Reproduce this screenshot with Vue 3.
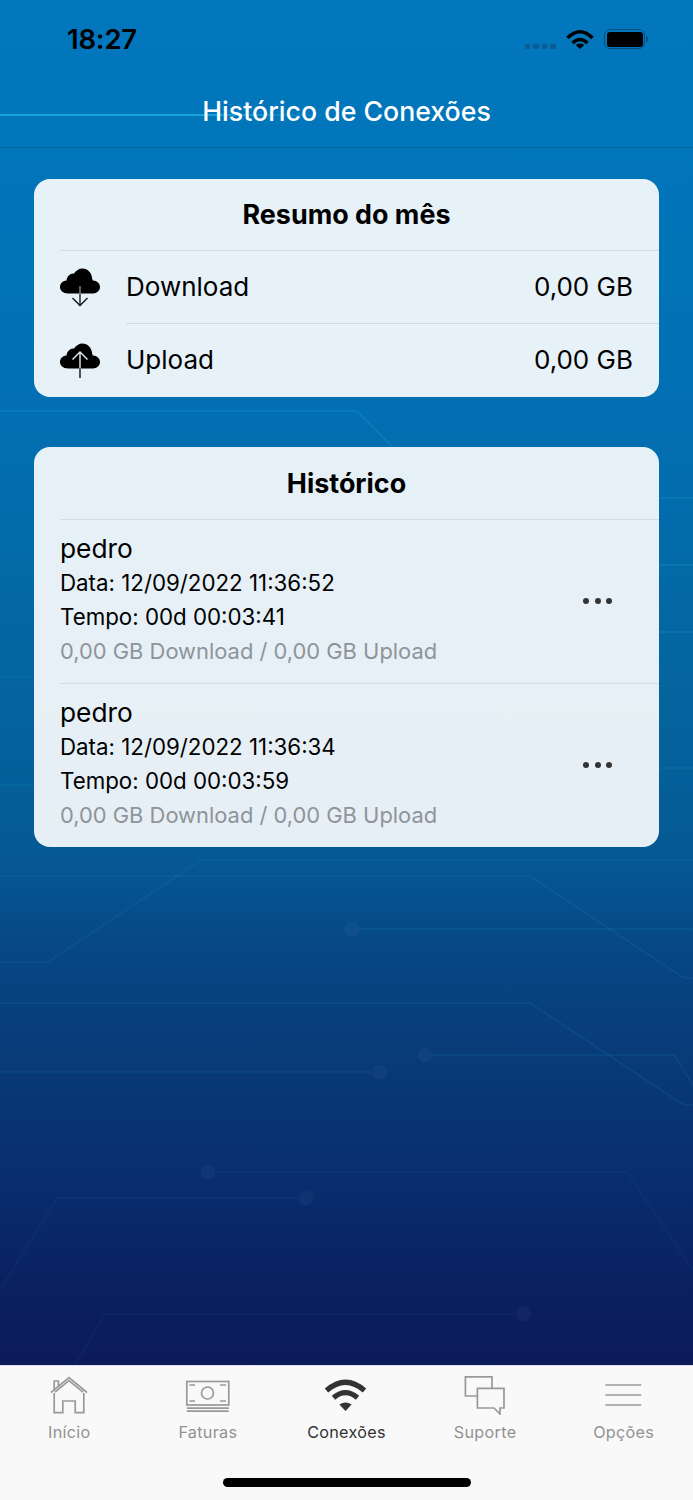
<script setup>
const summary = [
  { label: 'Download', value: '0,00 GB', dir: 'down' },
  { label: 'Upload', value: '0,00 GB', dir: 'up' },
]
const sessions = [
  { user: 'pedro', date: 'Data: 12/09/2022 11:36:52', time: 'Tempo: 00d 00:03:41', usage: '0,00 GB Download / 0,00 GB Upload' },
  { user: 'pedro', date: 'Data: 12/09/2022 11:36:34', time: 'Tempo: 00d 00:03:59', usage: '0,00 GB Download / 0,00 GB Upload' },
]
const tabs = [
  { label: 'Início', id: 'home' },
  { label: 'Faturas', id: 'bill' },
  { label: 'Conexões', id: 'wifi', active: true },
  { label: 'Suporte', id: 'chat' },
  { label: 'Opções', id: 'menu' },
]
const bright = ['M0 411H357L393 447', 'M659 498H693', 'M659 565H693', 'M659 632H693']
const mid = [
  'M0 677H34', 'M0 785H34', 'M659 768H693',
  'M0 962H48L201 860H693',
  'M0 876H530L684 978H693',
  'M360 929H693',
  'M0 1003H530L684 1105H693',
  'M433 1055H674L693 1085',
  'M0 1072H372',
]
const faint = [
  'M216 1172H627L693 1270',
  'M298 1198H57L0 1290',
  'M515 1314H105L75 1365',
]
const nodes = [[352, 929], [425, 1055], [380, 1072], [208, 1172], [306, 1198], [523, 1314]]
const cloud = 'M8 25C3 25 0 22 0 18.5C0 14.8 3 12.2 6.5 12C7 7.6 10.5 4.4 14 5C16 2 19 0 22.5 0C27.5 0 31.5 4 32 9C32 10 32.6 11.6 33 12C37 12.2 40 15 40 18.5C40 22 37 25 33 25Z'
</script>

<template>
  <div class="screen">
    <svg class="circuit" width="693" height="1500" viewBox="0 0 693 1500" aria-hidden="true">
      <defs>
        <linearGradient id="glow" x1="0" y1="0" x2="1" y2="0">
          <stop offset="0" stop-color="#19a3d6" />
          <stop offset="0.6" stop-color="#19a3d6" />
          <stop offset="1" stop-color="#19a3d6" stop-opacity="0" />
        </linearGradient>
      </defs>
      <rect x="0" y="114" width="330" height="2" fill="url(#glow)" />
      <path v-for="d in bright" :key="d" :d="d" class="trace bright" />
      <path v-for="d in mid" :key="d" :d="d" class="trace mid" />
      <path v-for="d in faint" :key="d" :d="d" class="trace faint" />
      <circle v-for="n in nodes" :key="n[0]" :cx="n[0]" :cy="n[1]" r="7.5" class="node" />
    </svg>

    <header class="top">
      <div class="status">
        <span class="clock">18:27</span>
        <div class="status-icons">
          <div class="signal"><i></i><i></i><i></i><i></i></div>
          <svg class="st-wifi" width="28" height="20" viewBox="0 0 28 20">
            <path d="M1.5 9Q14 -3.5 26.5 9" fill="none" stroke="#000" stroke-width="3.5" />
            <path d="M6.5 14Q14 7 21.5 14" fill="none" stroke="#000" stroke-width="3.5" />
            <path d="M14 20L9.8 15.9Q14 13 18.2 15.9Z" fill="#000" />
          </svg>
          <div class="battery"><div class="charge"></div></div>
          <div class="nub"></div>
        </div>
      </div>
      <h1 class="nav-title">Histórico de Conexões</h1>
    </header>

    <main class="content">
      <section class="card">
        <h2 class="card-title">Resumo do mês</h2>
        <div class="rows">
          <div v-for="row in summary" :key="row.label" class="sum-row">
            <svg class="cloud" width="40" height="40" viewBox="0 0 40 40">
              <template v-if="row.dir === 'down'">
                <path :d="cloud" fill="#000" transform="translate(0 .5)" />
                <path d="M20 18V26" fill="none" stroke="#8d9499" stroke-width="1.3" />
                <path d="M20 26V37.5" fill="none" stroke="#111" stroke-width="1.3" />
                <path d="M12.5 30L20 37.5L27.5 30" fill="none" stroke="#111" stroke-width="1.3" />
              </template>
              <template v-else>
                <path :d="cloud" fill="#000" transform="translate(0 2.5)" />
                <path d="M20 11V27.5" fill="none" stroke="#e8f0f6" stroke-width="1.4" />
                <path d="M20 27.5V37" fill="none" stroke="#111" stroke-width="1.4" />
                <path d="M12.5 18.5L20 11L27.5 18.5" fill="none" stroke="#e8f0f6" stroke-width="1.4" />
              </template>
            </svg>
            <div class="sum-body">
              <span>{{ row.label }}</span>
              <span>{{ row.value }}</span>
            </div>
          </div>
        </div>
      </section>

      <section class="card history">
        <h2 class="card-title">Histórico</h2>
        <div v-for="s in sessions" :key="s.date" class="session">
          <div class="session-text">
            <div class="user">{{ s.user }}</div>
            <div class="meta">{{ s.date }}</div>
            <div class="meta">{{ s.time }}</div>
            <div class="meta usage">{{ s.usage }}</div>
          </div>
          <div class="more"><i></i><i></i><i></i></div>
        </div>
      </section>
    </main>

    <nav class="tabbar">
      <div class="tabs">
        <div v-for="t in tabs" :key="t.id" class="tab" :class="{ active: t.active }">
          <svg width="48" height="40" viewBox="0 0 48 40" class="tab-icon">
            <g v-if="t.id === 'home'">
              <path d="M6 17.5L24 2.5L42 17.5" />
              <path d="M9.2 18V37.6H17.8V26H30.2V37.6H38.8V18" />
              <path d="M9.2 15V6H13.4V11.5" />
              <path d="M10 17.2L24 5.6L38 17.2" />
            </g>
            <g v-else-if="t.id === 'bill'">
              <rect x="2.8" y="6.5" width="42" height="23.5" />
              <circle cx="23.5" cy="18" r="6" />
              <path d="M5.5 10H11M36 10H42M5.5 26H11M36 26H42" />
              <path d="M2.8 33.2H44.8M2.8 36.2H44.8" />
            </g>
            <g v-else-if="t.id === 'wifi'">
              <path d="M4.5 15.5Q23.5 -1 42.5 15.5" class="bold" />
              <path d="M11.5 22.8Q23.5 12.4 35.5 22.8" class="bold" />
              <path d="M23.5 36L17.4 29.6Q23.5 25.4 29.6 29.6Z" class="solid" />
            </g>
            <g v-else-if="t.id === 'chat'">
              <path d="M31 13V1.8H4.4V21H16" />
              <path d="M16.4 13.4H43V33H39V39L33 33H16.4Z" />
            </g>
            <g v-else>
              <path d="M5.3 10H41.3M5.3 20H41.3M5.3 30H41.3" />
            </g>
          </svg>
          <span class="tab-label">{{ t.label }}</span>
        </div>
      </div>
      <div class="home-bar"></div>
    </nav>
  </div>
</template>

<style scoped>
.screen {
  position: relative;
  width: 693px;
  height: 1500px;
  overflow: hidden;
  display: flex;
  flex-direction: column;
  font-family: Inter, "Liberation Sans", sans-serif;
  color: #000;
  background: linear-gradient(180deg, #0277bd 0, #0174b8 250px, #026fb2 420px, #04659f 680px, #055a95 850px, #074584 960px, #083b78 1060px, #092b6b 1200px, #0b1f5e 1300px, #0c1a5a 1365px);
}
.circuit {
  position: absolute;
  left: 0;
  top: 0;
}
.trace {
  fill: none;
  stroke: #2bb6dc;
  stroke-width: 1.5;
}
.bright {
  stroke-opacity: 0.22;
}
.mid {
  stroke-opacity: 0.11;
}
.faint {
  stroke-opacity: 0.06;
}
.node {
  fill: #7d9cc4;
  fill-opacity: 0.07;
}
.top {
  position: relative;
  height: 148px;
  border-bottom: 1px solid #04649f;
  box-sizing: border-box;
}
.status {
  height: 80px;
  display: flex;
  justify-content: space-between;
  padding: 0 45px 0 67px;
}
.clock {
  font-size: 27.5px;
  font-weight: 600;
  line-height: 30px;
  margin-top: 24px;
  letter-spacing: -0.2px;
}
.status-icons {
  display: flex;
  align-items: flex-start;
  padding-top: 29px;
}
.signal {
  display: flex;
  gap: 3px;
  margin: 15px 10.5px 0 0;
}
.signal i {
  width: 5.5px;
  height: 5px;
  border-radius: 1px;
  background: #0a5c93;
}
.battery {
  margin-left: 10px;
  width: 41px;
  height: 20px;
  box-sizing: border-box;
  border: 1.5px solid #0a4f80;
  border-radius: 6px;
  padding: 1.5px;
}
.charge {
  height: 100%;
  background: #000;
  border-radius: 3px;
}
.nub {
  width: 2px;
  height: 6px;
  margin: 7px 0 0 1px;
  background: #0a4f80;
  border-radius: 0 2px 2px 0;
}
.nav-title {
  margin: 0;
  text-align: center;
  color: #fff;
  font-size: 26.7px;
  font-weight: 500;
  line-height: 62px;
}
.content {
  position: relative;
  flex: 1;
  padding: 31px 34px 0;
  display: flex;
  flex-direction: column;
  gap: 50px;
}
.card {
  border-radius: 16px;
  background: rgba(255, 255, 255, 0.9);
  overflow: hidden;
}
.card-title {
  margin: 0;
  height: 71px;
  line-height: 71px;
  text-align: center;
  font-size: 26.9px;
  font-weight: 700;
}
.history .card-title {
  height: 72px;
  line-height: 72px;
}
.sum-row {
  display: flex;
  align-items: stretch;
  height: 73px;
}
.rows {
  margin-left: 26px;
  border-top: 1px solid #d2dbe3;
}
.cloud {
  flex: none;
  overflow: visible;
  align-self: center;
}
.sum-body {
  flex: 1;
  margin-left: 26px;
  padding-right: 26px;
  padding-bottom: 2px;
  display: flex;
  justify-content: space-between;
  align-items: center;
  font-size: 26px;
}
.sum-row:first-child .sum-body {
  border-bottom: 1px solid #d2dbe3;
}
.session {
  margin-left: 26px;
  height: 164px;
  box-sizing: border-box;
  border-top: 1px solid #d2dbe3;
  display: flex;
  align-items: center;
  justify-content: space-between;
  padding-right: 47px;
}
.session-text {
  padding-bottom: 4px;
}
.user {
  font-size: 26.3px;
  line-height: 34px;
}
.meta {
  font-size: 22.3px;
  line-height: 34px;
}
.usage {
  font-size: 21.9px;
  color: #8e9499;
}
.more {
  display: flex;
  gap: 5.5px;
  margin-bottom: 2px;
}
.more i {
  width: 6px;
  height: 6px;
  border-radius: 50%;
  background: #333;
}
.tabbar {
  position: relative;
  height: 135px;
  flex: none;
  background: #f9f9f9;
  border-top: 1px solid #dcdfe6;
  box-sizing: border-box;
}
.tabs {
  display: grid;
  grid-template-columns: repeat(5, 1fr);
  padding-top: 9px;
}
.tab {
  display: flex;
  flex-direction: column;
  align-items: center;
  color: #929292;
}
.tab.active {
  color: #333;
}
.tab-icon {
  fill: none;
  stroke: #999;
  stroke-width: 1.7;
}
.tab.active .tab-icon {
  stroke: #333;
}
.bold {
  stroke-width: 5.2;
}
.solid {
  fill: #333;
  stroke: none;
}
.tab-label {
  font-size: 16.2px;
  line-height: 20px;
  margin-top: 7px;
  letter-spacing: 0.3px;
}
.home-bar {
  position: absolute;
  left: 223px;
  top: 112px;
  width: 248px;
  height: 9px;
  border-radius: 5px;
  background: #000;
}
</style>
